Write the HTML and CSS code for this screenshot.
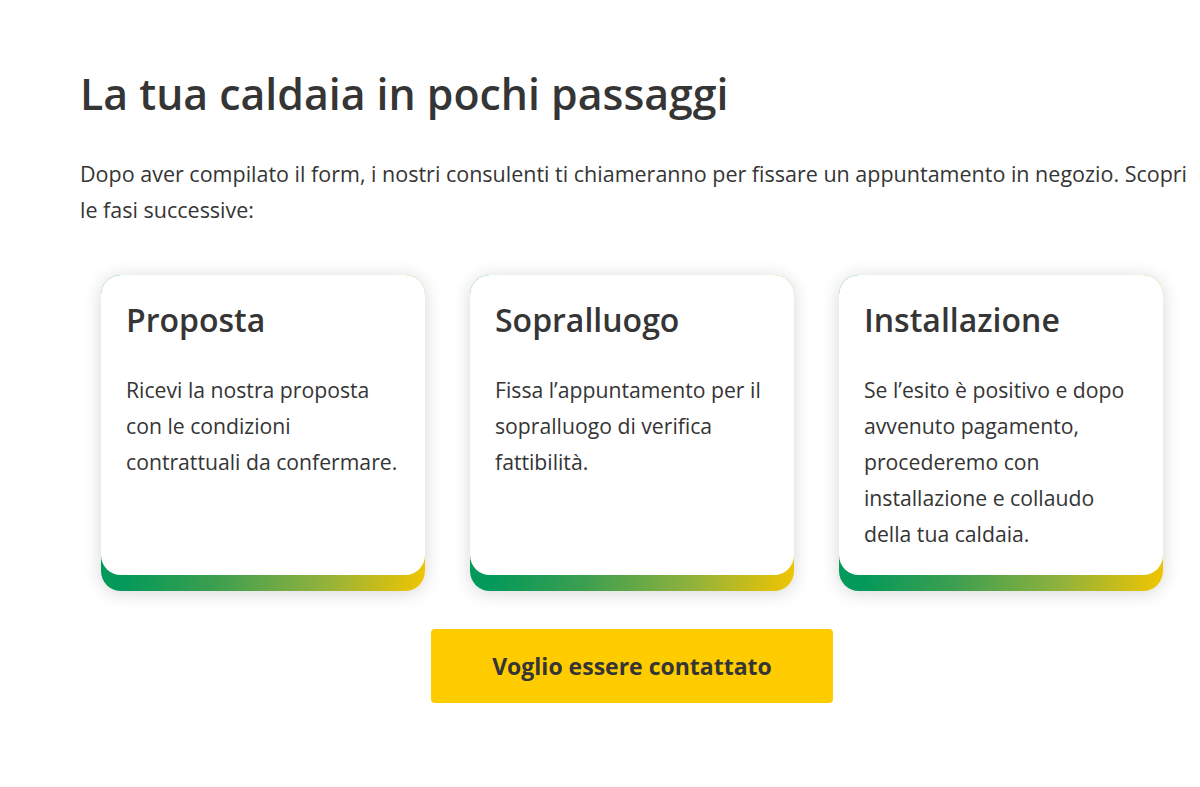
FILE: index.html
```html
<!DOCTYPE html>
<html lang="it">
<head>
<meta charset="utf-8">
<title>La tua caldaia in pochi passaggi</title>
<link rel="stylesheet" href="styles.css">
</head>
<body>
<main class="section">
  <h1 class="title">La tua caldaia in pochi passaggi</h1>
  <p class="intro">Dopo aver compilato il form, i nostri consulenti ti chiameranno per fissare un appuntamento in negozio. Scopri le fasi successive:</p>
  <div class="cards">
    <div class="card">
      <div class="card-inner">
        <h2 class="card-title">Proposta</h2>
        <p class="card-text">Ricevi la nostra proposta con le condizioni contrattuali da confermare.</p>
      </div>
    </div>
    <div class="card">
      <div class="card-inner">
        <h2 class="card-title">Sopralluogo</h2>
        <p class="card-text">Fissa l’appuntamento per il sopralluogo di verifica fattibilità.</p>
      </div>
    </div>
    <div class="card">
      <div class="card-inner">
        <h2 class="card-title">Installazione</h2>
        <p class="card-text">Se l’esito è positivo e dopo avvenuto pagamento, procederemo con installazione e collaudo della tua caldaia.</p>
      </div>
    </div>
  </div>
  <div class="cta-row">
    <a class="cta" href="#">Voglio essere contattato</a>
  </div>
</main>
</body>
</html>
```

FILE: styles.css
```css
html, body {
  margin: 0;
  padding: 0;
  background: #ffffff;
}
body {
  font-family: "Open Sans", "Noto Sans", "Liberation Sans", sans-serif;
  color: #353535;
  width: 1200px;
  height: 787px;
  overflow: hidden;
}
.section {
  width: 1110px;
  margin-left: 80px;
  padding-top: 66px;
}
.title {
  margin: 0;
  font-size: 42.8px;
  line-height: 56px;
  font-weight: 600;
  color: #353535;
}
.intro {
  margin: 34px 0 0;
  font-size: 21.5px;
  line-height: 36px;
  color: #353535;
}
.cards {
  display: flex;
  justify-content: center;
  gap: 45px;
  margin-top: 47px;
  padding-right: 6px;
}
.card {
  width: 324px;
  border-radius: 20px;
  padding-bottom: 16px;
  background: linear-gradient(100deg, #009a5b 0%, #03995a 20%, #3e9f4f 45%, #8eb13e 72%, #f2c500 100%);
  box-shadow: 0 2px 18px rgba(0, 0, 0, 0.16);
}
.card-inner {
  background: #ffffff;
  border-radius: 20px;
  height: 300px;
  box-sizing: border-box;
  padding: 23px 20px 0 25px;
}
.card-title {
  margin: 0;
  font-size: 32px;
  line-height: 44px;
  font-weight: 600;
  color: #353535;
}
.card-text {
  margin: 30px 0 0;
  font-size: 21.2px;
  line-height: 36px;
  color: #353535;
}
.cta-row {
  display: flex;
  justify-content: center;
  margin-top: 38px;
  padding-right: 6px;
}
.cta {
  display: flex;
  align-items: center;
  justify-content: center;
  width: 402px;
  height: 74px;
  background: #ffcc00;
  border-radius: 4px;
  color: #353535;
  font-size: 23px;
  font-weight: 700;
  text-decoration: none;
}
```
